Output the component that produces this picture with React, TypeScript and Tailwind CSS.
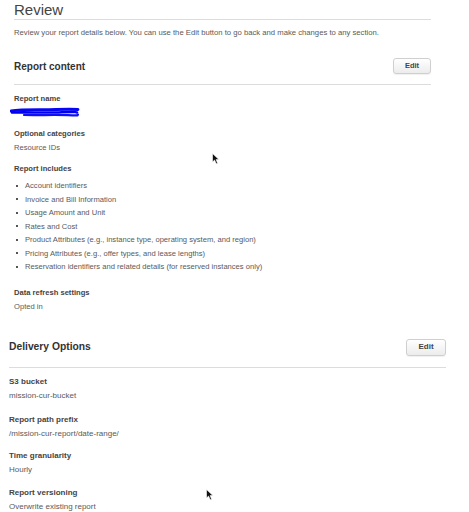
import React from 'react';

const includes = [
  'Account identifiers',
  'Invoice and Bill Information',
  'Usage Amount and Unit',
  'Rates and Cost',
  'Product Attributes (e.g., instance type, operating system, and region)',
  'Pricing Attributes (e.g., offer types, and lease lengths)',
  'Reservation identifiers and related details (for reserved instances only)',
];

function EditButton({ big }: { big?: boolean }) {
  return (
    <button
      className={`${
        big ? 'h-[17px] w-[40px] text-[8px]' : 'h-[16px] w-[38px] text-[7.5px]'
      } rounded-[3px] border border-[#cfcfcf] bg-gradient-to-b from-white to-[#ececec] font-bold text-[#444] shadow-[0_1px_1px_rgba(0,0,0,0.06)]`}
    >
      Edit
    </button>
  );
}

function Cursor({ className }: { className: string }) {
  return (
    <svg className={`absolute ${className}`} width="8" height="12" viewBox="0 0 8 12">
      <path d="M0.5 0.5 L0.5 9 L2.6 7.1 L4.2 10.8 L5.6 10.2 L4.1 6.6 L6.9 6.6 Z" fill="#111" stroke="#fff" strokeWidth="0.6" />
    </svg>
  );
}

function Scribble() {
  return (
    <svg width="70" height="11" viewBox="0 0 70 11" className="-ml-[4px]">
      <path d="M1 4 C 12 2, 30 3, 46 2.5 S 62 2, 68 2.5" stroke="#0606f5" strokeWidth="2.8" fill="none" strokeLinecap="round" />
      <path d="M2 5.5 C 18 5, 36 6, 52 5.2 S 64 5, 67 5.5" stroke="#0000ee" strokeWidth="2.6" fill="none" strokeLinecap="round" />
      <path d="M14 8 C 28 8.4, 44 7.6, 58 8.2 S 66 8, 68 7.5" stroke="#1010f8" strokeWidth="2.2" fill="none" strokeLinecap="round" />
    </svg>
  );
}

export default function App() {
  return (
    <div className="relative h-[512px] w-[469px] overflow-hidden bg-white font-['Liberation_Sans',Arial,sans-serif]">
      {/* report content part */}
      <div className="ml-[14px] w-[417px]">
        <div className="h-[20px] border-b border-[#dcdcdc] text-[15px] leading-[19px] text-[#444]">Review</div>
        <p className="mt-[8px] text-[7.7px] leading-[10px] text-[#5a5a5a]">
          Review your report details below. You can use the Edit button to go back and make changes to any section.
        </p>

        <div className="mt-[20px] flex items-center justify-between border-b border-[#dcdcdc] pb-[10px]">
          <h2 className="text-[10px] font-bold text-[#333]">Report content</h2>
          <EditButton />
        </div>

        <div className="mt-[8px] text-[7.6px] leading-[11px] text-[#5a5a5a]">
          <div className="font-bold text-[#444]">Report name</div>
          <div className="mt-[3px] h-[11px]">
            <Scribble />
          </div>

          <div className="mt-[10px] font-bold text-[#444]">Optional categories</div>
          <div className="mt-[3px]">Resource IDs</div>

          <div className="mt-[10px] font-bold text-[#444]">Report includes</div>
          <ul className="mt-[5px]">
            {includes.map((item) => (
              <li key={item} className="flex items-center gap-[7px] pl-[2px] leading-[13.5px]">
                <span className="h-[2px] w-[2px] bg-[#555]" />
                {item}
              </li>
            ))}
          </ul>

          <div className="mt-[13px] font-bold text-[#444]">Data refresh settings</div>
          <div className="mt-[3px]">Opted in</div>
        </div>
      </div>

      {/* delivery options part */}
      <div className="ml-[9px] mt-[27px] w-[437px]">
        <div className="flex items-center justify-between border-b border-[#dcdcdc] pb-[11px]">
          <h2 className="text-[10.3px] font-bold text-[#333]">Delivery Options</h2>
          <EditButton big />
        </div>

        <div className="mt-[8px] text-[8px] leading-[12px] text-[#5a5a5a]">
          <div className="font-bold text-[#444]">S3 bucket</div>
          <div className="mt-[2px]">mission-cur-bucket</div>

          <div className="mt-[12px] font-bold text-[#444]">Report path prefix</div>
          <div className="mt-[2px]">/mission-cur-report/date-range/</div>

          <div className="mt-[10px] font-bold text-[#444]">Time granularity</div>
          <div className="mt-[2px]">Hourly</div>

          <div className="mt-[11px] font-bold text-[#444]">Report versioning</div>
          <div className="mt-[2px]">Overwrite existing report</div>
        </div>
      </div>

      <Cursor className="left-[212px] top-[153px]" />
      <Cursor className="left-[206px] top-[489px]" />
    </div>
  );
}
